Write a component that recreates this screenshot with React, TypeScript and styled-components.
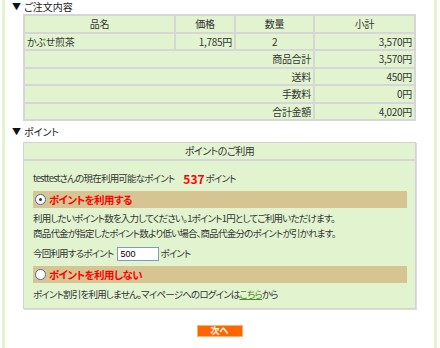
import styled, { createGlobalStyle } from "styled-components";

const GlobalStyle = createGlobalStyle`
  html, body {
    margin: 0;
    padding: 0;
    background: #fff;
  }
  body {
    font-family: "Noto Sans CJK JP", "Liberation Sans", sans-serif;
    font-size: 10px;
    color: #333;
    font-feature-settings: "palt";
  }
`;

const Page = styled.div`
  width: 440px;
  height: 348px;
  overflow: hidden;
`;

const Frame = styled.div`
  margin-left: 2px;
  width: 429px;
  height: 348px;
  border-left: 3px solid #e3f5d0;
  border-right: 3px solid #e3f5d0;
`;

const Heading = styled.h3<{ $top: number; $bottom: number }>`
  margin: ${(p) => p.$top}px 0 ${(p) => p.$bottom}px 7px;
  font-size: 10px;
  font-weight: normal;
  line-height: 13px;
  color: #222;
  display: flex;
  align-items: center;
  gap: 3px;
`;

const Arrow = styled.span`
  font-size: 9px;
  color: #111;
`;

const Inset = styled.div`
  margin: 0 18px;
`;

const Table = styled.table`
  width: 100%;
  border-collapse: collapse;
  border: 2px solid #d6d6d6;
  background: #e1f4cf;
`;

const Cell = styled.td<{ $align?: "left" | "right" | "center" }>`
  border: 2px solid #d6d6d6;
  padding: 1px 2px;
  height: 13.5px;
  line-height: 13px;
  text-align: ${(p) => p.$align ?? "left"};
  white-space: nowrap;
  letter-spacing: -0.3px;
`;

const HeadCell = styled(Cell).attrs({ as: "th" })`
  font-weight: normal;
  text-align: center;
`;

const Box = styled.div`
  border: 1px solid #d2d2d2;
  box-shadow: 1px 1px 0 #dcdcdc;
  background: #e1f4cf;
  height: 165px;
`;

const BoxHeader = styled.div`
  text-align: center;
  line-height: 16px;
  letter-spacing: -0.5px;
  border-bottom: 2px solid #d6d6d6;
`;

const BoxBody = styled.div`
  padding: 10px 8px 0 9px;
  font-size: 9.5px;
  letter-spacing: -0.8px;
`;

const Line = styled.div<{ $mb?: number }>`
  line-height: 15px;
  margin-bottom: ${(p) => p.$mb ?? 0}px;
  display: flex;
  align-items: center;
  white-space: nowrap;
`;

const Points = styled.strong`
  color: #ff0000;
  font-size: 12px;
  margin: 0 1px 0 9px;
  letter-spacing: 0;
`;

const OptionBar = styled.label<{ $mb: number }>`
  display: flex;
  align-items: center;
  gap: 2px;
  height: 17px;
  padding-left: 2px;
  margin: 5px 0 ${(p) => p.$mb}px;
  background: #d6c592;
  color: #ff0000;
  font-weight: bold;
  font-size: 10.5px;
  letter-spacing: -0.6px;
`;

const Radio = styled.span<{ $checked?: boolean }>`
  width: 9px;
  height: 9px;
  margin-right: 1px;
  border-radius: 50%;
  border: 1px solid #4a6a9a;
  background: #fff;
  display: inline-flex;
  align-items: center;
  justify-content: center;
  &::after {
    content: "";
    width: 3px;
    height: 3px;
    border-radius: 50%;
    background: ${(p) => (p.$checked ? "#333" : "transparent")};
  }
`;

const PointInput = styled.input`
  width: 38px;
  height: 12px;
  margin: 0 1px 0 4px;
  padding: 0 0 0 2px;
  border: 1px solid #7f9db9;
  font-family: "Liberation Sans", sans-serif;
  font-size: 9px;
  letter-spacing: 0;
  color: #000;
  outline: none;
`;

const Link = styled.a`
  color: #4b8a1f;
  text-decoration: underline;
`;

const Actions = styled.div`
  display: flex;
  justify-content: center;
  margin-top: 16px;
`;

const NextButton = styled.button`
  width: 46px;
  height: 12px;
  padding: 0;
  border: 1px solid #ffb070;
  background: #ff6600;
  color: #fff;
  font-family: "Noto Sans CJK JP", sans-serif;
  font-size: 9px;
  font-weight: bold;
  line-height: 10px;
`;

const totals = [
  { label: "商品合計", value: "3,570円" },
  { label: "送料", value: "450円" },
  { label: "手数料", value: "0円" },
  { label: "合計金額", value: "4,020円" },
];

export default function App() {
  return (
    <Page>
      <GlobalStyle />
      <Frame>
        <Heading $top={0} $bottom={1}>
          <Arrow>▼</Arrow>ご注文内容
        </Heading>
        <Inset>
          <Table>
            <colgroup>
              <col style={{ width: 151 }} />
              <col style={{ width: 60 }} />
              <col style={{ width: 79 }} />
              <col />
            </colgroup>
            <tbody>
              <tr>
                <HeadCell>品名</HeadCell>
                <HeadCell>価格</HeadCell>
                <HeadCell>数量</HeadCell>
                <HeadCell>小計</HeadCell>
              </tr>
              <tr>
                <Cell>かぶせ煎茶</Cell>
                <Cell $align="right">1,785円</Cell>
                <Cell $align="center">2</Cell>
                <Cell $align="right">3,570円</Cell>
              </tr>
              {totals.map((t) => (
                <tr key={t.label}>
                  <Cell colSpan={3} $align="right">
                    {t.label}
                  </Cell>
                  <Cell $align="right">{t.value}</Cell>
                </tr>
              ))}
            </tbody>
          </Table>
        </Inset>

        <Heading $top={4} $bottom={4}>
          <Arrow>▼</Arrow>ポイント
        </Heading>
        <Inset>
          <Box>
            <BoxHeader>ポイントのご利用</BoxHeader>
            <BoxBody>
              <Line>
                testtestさんの現在利用可能なポイント<Points>537</Points>ポイント
              </Line>
              <OptionBar $mb={3}>
                <Radio $checked />
                ポイントを利用する
              </OptionBar>
              <Line>
                利用したいポイント数を入力してください。1ポイント1円としてご利用いただけます。
              </Line>
              <Line $mb={5}>
                商品代金が指定したポイント数より低い場合、商品代金分のポイントが引かれます。
              </Line>
              <Line>
                今回利用するポイント
                <PointInput defaultValue="500" />
                ポイント
              </Line>
              <OptionBar $mb={4}>
                <Radio />
                ポイントを利用しない
              </OptionBar>
              <Line>
                ポイント割引を利用しません。マイページへのログインは<Link href="#">こちら</Link>から
              </Line>
            </BoxBody>
          </Box>
        </Inset>
        <Actions>
          <NextButton>次へ</NextButton>
        </Actions>
      </Frame>
    </Page>
  );
}
